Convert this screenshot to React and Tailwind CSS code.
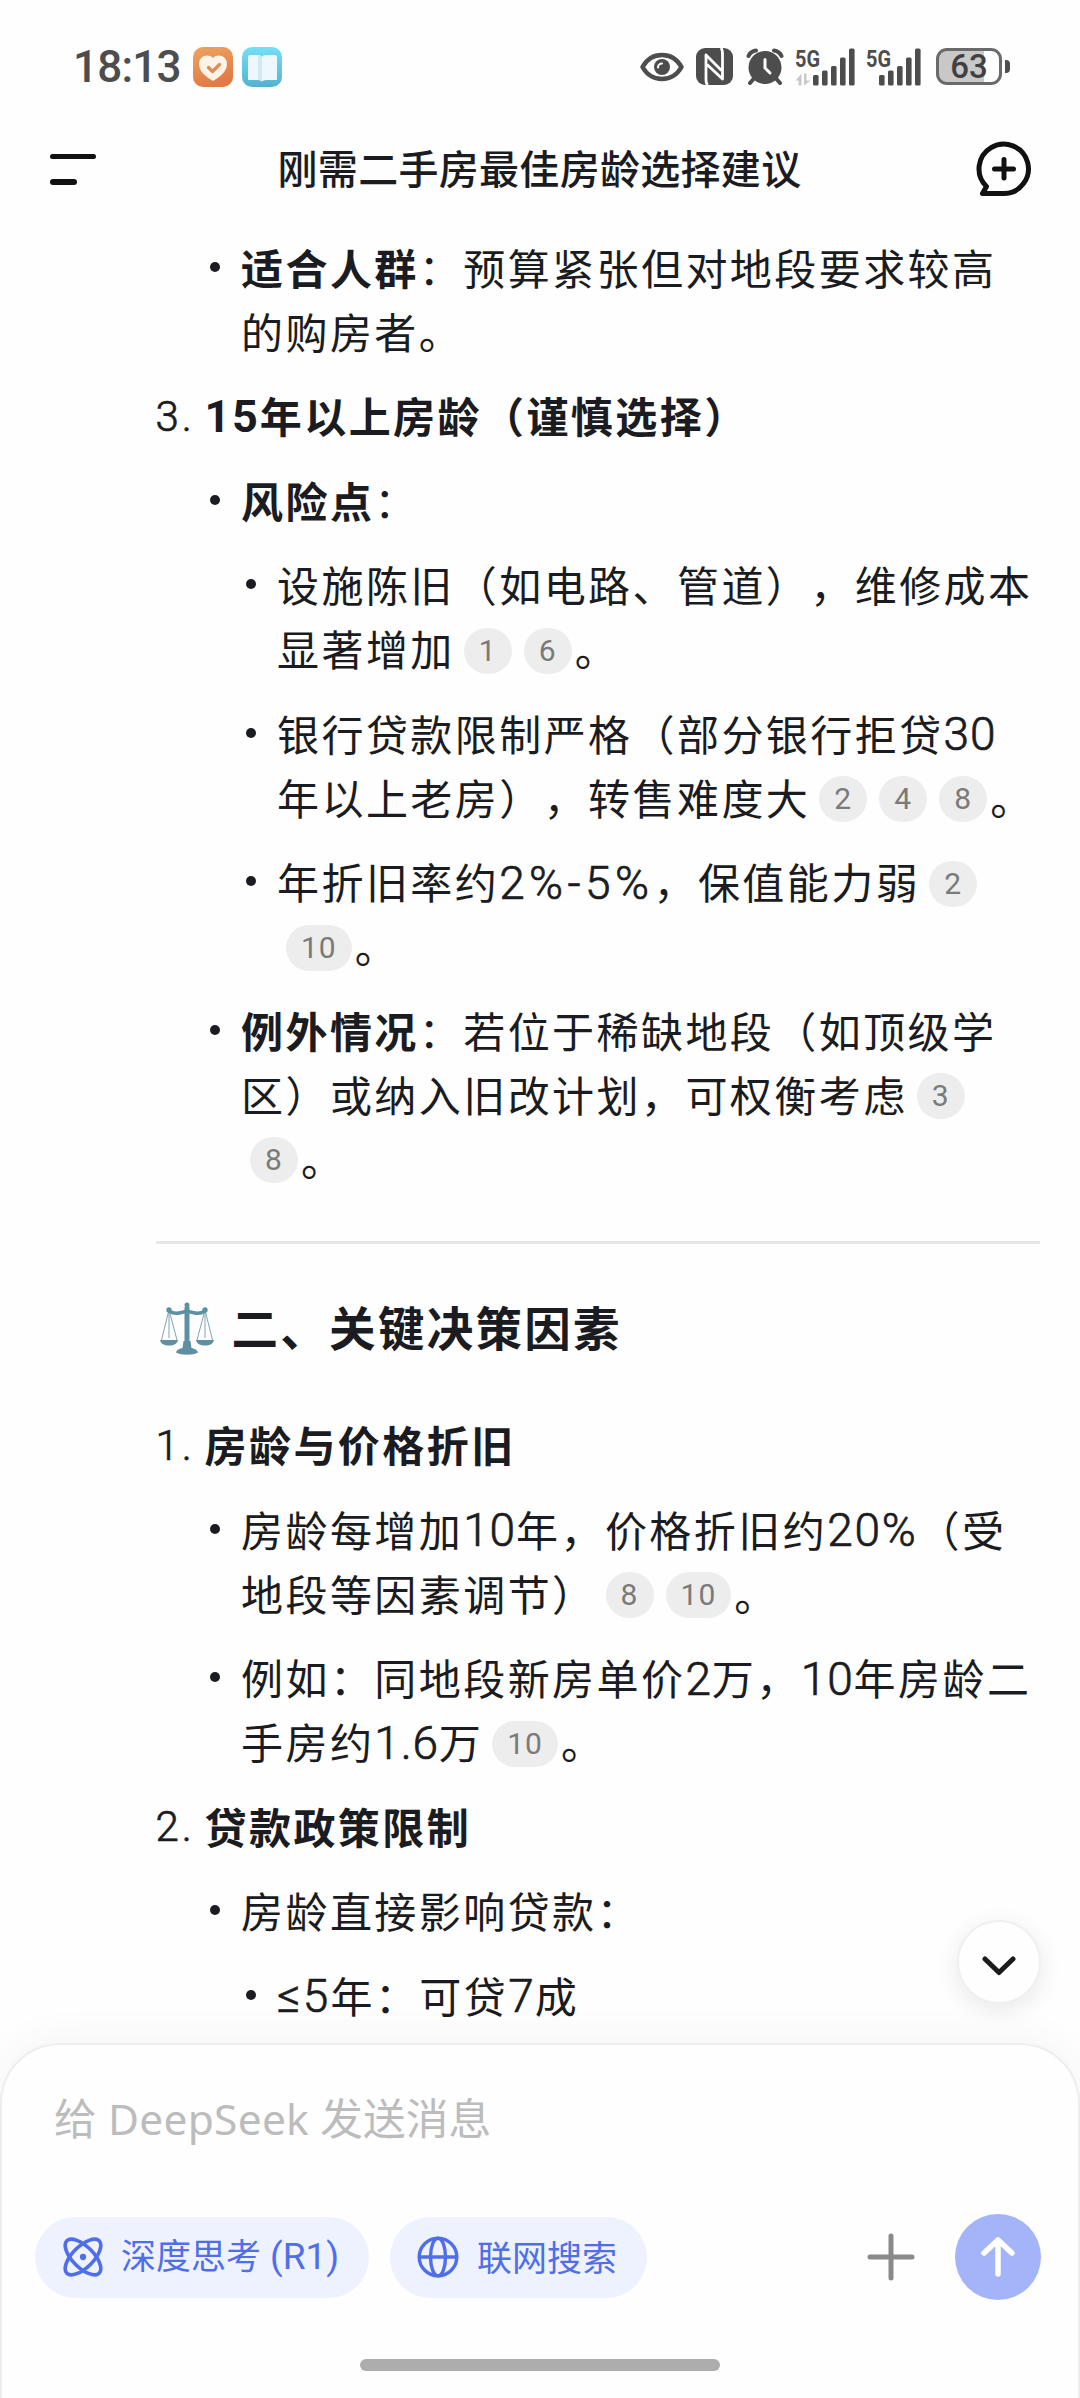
const LINE = 'h-16 flex items-center whitespace-nowrap'

const THIN = 'font-light [-webkit-text-stroke:0.7px_currentColor]'

function Num({ children, bold, className = 'text-[46px] tracking-[0.9px]' }) {
  return <span className={`font-[Roboto] mt-[3px] ${bold ? 'font-bold' : THIN} ${className}`}>{children}</span>
}

function Cite({ n }) {
  return (
    <span className="inline-flex items-center justify-center h-[46px] min-w-[48px] px-[15px] ml-[9px] mr-[3px] mt-[5px] rounded-full bg-[#ededed] text-[#7a7a7a] font-[Roboto] text-[30px] tracking-[1px]">
      {n}
    </span>
  )
}

function Line({ children }) {
  return <div className={LINE}>{children}</div>
}

function Bullet({ level = 2, children }) {
  return (
    <li className={level === 2 ? 'flex pl-[54px]' : 'flex pl-[90px]'}>
      <span className="w-2.5 h-2.5 mt-[27px] mr-[21.500px] rounded-full bg-[#1b1c21] shrink-0" />
      <div>{children}</div>
    </li>
  )
}

function Numbered({ n, children }) {
  return (
    <li className="flex">
      <div className={`${LINE} w-[49px]`}><Num className="text-[42px] tracking-[3px]">{n}.</Num></div>
      <div className={`${LINE} font-bold`}>{children}</div>
    </li>
  )
}

// x is where the first of the five bars starts
function Signal({ x, data }) {
  return (
    <svg className="h-[50px] -mt-3" width={x + 42} viewBox={`0 -12 ${x + 42} 50`} fill="#4d4d4d">
      <text x="0" y="18.500" fontSize="24" fontWeight="700" fontFamily="Roboto" textLength="25" lengthAdjust="spacingAndGlyphs">5G</text>
      {data && <path d="M0.500 32.500l6-7v12h-3v-5zM9 37.500v-12h2.500v7h4z" fill="#c9c9c9" />}
      <rect x={x} y="27" width="5.600" height="10.500" rx="1.500" />
      <rect x={x + 9} y="22.500" width="5.600" height="15" rx="1.500" />
      <rect x={x + 18} y="18" width="5.600" height="19.500" rx="1.500" />
      <rect x={x + 27} y="9.500" width="5.600" height="28" rx="1.500" />
      <rect x={x + 36} y="0.500" width="5.600" height="37" rx="1.500" />
    </svg>
  )
}

function StatusBar() {
  return (
    <div className="flex items-center h-[133px] pl-[73px] text-[#4d4d4d]">
      <span className="w-[120px] font-[Roboto] font-medium text-[44px] tracking-[-0.800px]">18:13</span>
      <svg className="w-10 h-10" viewBox="0 0 40 40">
        <defs>
          <linearGradient id="orange" x1="0" y1="0" x2="0.3" y2="1">
            <stop stopColor="#eda45f" />
            <stop offset="1" stopColor="#e27a45" />
          </linearGradient>
        </defs>
        <rect width="40" height="40" rx="10" fill="url(#orange)" />
        <path d="M20 34C11 29 6 23 6 17c0-8 9-11 14-6 5-5 14-2 14 6 0 6-5 12-14 17z" fill="#fdf3e9" />
        <path d="M15.500 20.500l4 4 7-7" fill="none" stroke="#e38a50" strokeWidth="3.200" strokeLinecap="round" strokeLinejoin="round" />
      </svg>
      <svg className="w-10 h-10 ml-[9px]" viewBox="0 0 40 40">
        <defs>
          <linearGradient id="sky" x1="0" y1="0" x2="0" y2="1">
            <stop stopColor="#72dff8" />
            <stop offset="1" stopColor="#55b2cf" />
          </linearGradient>
        </defs>
        <rect width="40" height="40" rx="10" fill="url(#sky)" />
        <path d="M6 10q0-2 2-2h8q4 0 4 3 0-3 4-3h9q2 0 2 2v23H24q-3 0-4 1.500-1-1.500-4-1.500H6z" fill="#eef7fd" />
        <path d="M20 11v23q-1-1.500-4-1.500V8q4 0 4 3z" fill="#d3e8f6" />
      </svg>
      <svg className="w-11 h-[30px] ml-[358px]" viewBox="0 0 44 30" fill="none">
        <path d="M2.500 15C7 7 14 3 22 3s15 4 19.500 12C37 23 30 27 22 27S7 23 2.500 15z" stroke="#4d4d4d" strokeWidth="4.500" strokeLinejoin="round" />
        <circle cx="22" cy="15" r="8" fill="#4d4d4d" />
        <path d="M18 15.500a4 4 0 0 1 4-4" stroke="#fff" strokeWidth="2" strokeLinecap="round" />
      </svg>
      <svg className="w-[37px] h-[37px] ml-3" viewBox="0 0 37 37">
        <rect width="37" height="37" rx="9" fill="#4d4d4d" />
        <path d="M11.500 37q-1.500-2-1.500-5V7l15.500 15.500M25 0q1.500 2 1.500 5v26L11 16.500" fill="none" stroke="#fff" strokeWidth="2.800" strokeLinejoin="round" />
      </svg>
      <svg className="w-[38px] h-[37px] ml-[13px]" viewBox="0 0 38 37" fill="none" stroke="#4d4d4d" strokeLinecap="round">
        <circle cx="19" cy="19.500" r="16.500" fill="#4d4d4d" stroke="none" />
        <path d="M2.500 8C4 4.500 6.500 3 10 2.500M35.500 8C34 4.500 31.500 3 28 2.500M7.500 31L4 35M30.500 31l3.500 4" strokeWidth="4" />
        <path d="M19 11.500v8.500l5 5" stroke="#fff" strokeWidth="3" />
      </svg>
      <div className="flex gap-[11px] ml-[11px]">
        <Signal x={18} data />
        <Signal x={13} />
      </div>
      <div className="flex items-center justify-center w-[66px] h-[37px] ml-[15px] rounded-[11px] border-[3px] border-[#6a6a6a] bg-[linear-gradient(90deg,#c8c8c8_75%,#fefefe_75%)]">
        <span className="font-[Roboto] font-medium text-[33px] leading-none text-[#404040]">63</span>
      </div>
      <div className="w-[5px] h-[13px] ml-[3px] rounded-r bg-[#4d4d4d]" />
    </div>
  )
}

function Header() {
  return (
    <div className="flex items-center justify-between h-[72px] pl-[50px] pr-[48px]">
      <div className="w-[56px] flex flex-col gap-5">
        <div className="w-[46px] h-[5.500px] rounded-full bg-[#111]" />
        <div className="w-[27px] h-[5.500px] rounded-full bg-[#111]" />
      </div>
      <h1 className="-mt-1 mr-[3px] text-[40px] tracking-[0.3px] font-medium">刚需二手房最佳房龄选择建议</h1>
      <svg className="w-[56px] h-[56px]" viewBox="0 0 56 56" fill="none" stroke="#111" strokeWidth="5" strokeLinecap="round" strokeLinejoin="round">
        <path d="M6.500 52.500H28A24.700 24.700 0 1 0 10.500 45.500z" />
        <path d="M28 18.500v18.500M18.500 28h19" />
      </svg>
    </div>
  )
}

function Scales() {
  return (
    <svg className="w-[54px] h-[53px]" viewBox="0 0 54 53" fill="none" stroke="#5f8fa3">
      <path d="M9 8L1.500 38M9 8l8 30M45 8l-8 30M45 8l7.500 30M9 8v28M45 8v28" strokeWidth="1" stroke="#7fa5b5" />
      <path d="M9 9c6 4 11 2 18 0 7 2 12 4 18 0" strokeWidth="3.500" strokeLinecap="round" />
      <path d="M27 5v38" strokeWidth="5" />
      <circle cx="27" cy="3" r="2.500" fill="#5f8fa3" stroke="none" />
      <circle cx="9" cy="8" r="2.700" fill="#5f8fa3" stroke="none" />
      <circle cx="45" cy="8" r="2.700" fill="#5f8fa3" stroke="none" />
      <path d="M0 38h18c-1 4-4 5.500-9 5.500s-8-1.500-9-5.500zM36 38h18c-1 4-4 5.500-9 5.500s-8-1.500-9-5.500zM23.500 39h7l1 7c4 1 6 2 6.500 4.500-5 3-17 3-22 0 .5-2.500 2.500-3.500 6.500-4.500z" fill="#5f8fa3" stroke="none" />
    </svg>
  )
}

function Answer() {
  return (
    <div className="pl-[155.500px] pr-10 pt-[29.500px] text-[42px] tracking-[2.440px]">
      <ul className="flex flex-col gap-[20.500px]">
        <Bullet>
          <Line><b>适合人群</b>：预算紧张但对地段要求较高</Line>
          <Line>的购房者。</Line>
        </Bullet>
        <Numbered n={3}><Num bold className="text-[45px] tracking-[1.800px]">15</Num>年以上房龄（谨慎选择）</Numbered>
        <Bullet><Line><b>风险点</b>：</Line></Bullet>
        <Bullet level={3}>
          <Line>设施陈旧（如电路、管道），维修成本</Line>
          <Line>显著增加<Cite n={1} /><Cite n={6} />。</Line>
        </Bullet>
        <Bullet level={3}>
          <Line>银行贷款限制严格（部分银行拒贷<Num>30</Num></Line>
          <Line>年以上老房），转售难度大<Cite n={2} /><Cite n={4} /><Cite n={8} />。</Line>
        </Bullet>
        <Bullet level={3}>
          <Line>年折旧率约<Num className="text-[46px] tracking-[4.400px]">2%-5%</Num>，保值能力弱<Cite n={2} /></Line>
          <Line><Cite n={10} />。</Line>
        </Bullet>
        <Bullet>
          <Line><b>例外情况</b>：若位于稀缺地段（如顶级学</Line>
          <Line>区）或纳入旧改计划，可权衡考虑<Cite n={3} /></Line>
          <Line><Cite n={8} />。</Line>
        </Bullet>
      </ul>
      <hr className="mt-[51px] border-t-[3px] border-[#e6e6e6]" />
      <h2 className="flex items-center h-[72px] mt-[49px] text-[46.500px] tracking-[2.300px] font-bold">
        <span className="ml-1 mr-[18px]"><Scales /></span>
        <span className="-mt-1">二、关键决策因素</span>
      </h2>
      <ul className="flex flex-col gap-[20.500px] mt-[47.500px]">
        <Numbered n={1}>房龄与价格折旧</Numbered>
        <Bullet>
          <Line>房龄每增加<Num>10</Num>年，价格折旧约<Num className="text-[46px] tracking-[1.800px]">20%</Num>（受</Line>
          <Line>地段等因素调节）<Cite n={8} /><Cite n={10} />。</Line>
        </Bullet>
        <Bullet>
          <Line>例如：同地段新房单价<Num>2</Num>万，<Num>10</Num>年房龄二</Line>
          <Line>手房约<Num className="text-[46px] tracking-[0.800px]">1.6</Num>万<Cite n={10} />。</Line>
        </Bullet>
        <Numbered n={2}>贷款政策限制</Numbered>
        <Bullet><Line>房龄直接影响贷款：</Line></Bullet>
        <Bullet level={3}><Line><Num className="text-[46px] tracking-[2.200px]">≤5</Num>年：可贷<Num>7</Num>成</Line></Bullet>
      </ul>
    </div>
  )
}

function Chip({ icon, className, children }) {
  return (
    <button className={`flex items-center h-[81px] rounded-full bg-[#eef2ff] text-[#4f6ee8] text-[35px] whitespace-nowrap ${className}`}>
      {icon}
      <span className="-mt-[3px]">{children}</span>
    </button>
  )
}

function Composer() {
  return (
    <div className="absolute inset-x-0 bottom-0 h-[355px] px-[33px] rounded-t-[60px] border-[2.500px] border-b-0 border-[#eeeeee] bg-[#fefefe] shadow-[0_-6px_40px_rgba(0,0,0,0.04)]">
      <div className="flex items-baseline h-[60px] mt-[50px] pl-[19px] text-[42.700px] text-[#bcbcbc] whitespace-pre">
        给<span className="font-['Noto_Sans'] text-[42.500px] leading-none tracking-[0.25px]"> DeepSeek </span>发送消息
      </div>
      <div className="flex items-center h-[88px] mt-[58px]">
        <Chip
          className="w-[334px] pl-7"
          icon={
            <svg className="w-[40px] h-[40px] mr-[18px]" viewBox="0 0 42 42" fill="none" stroke="currentColor" strokeWidth="3.800">
              <ellipse cx="21" cy="21" rx="24" ry="11" transform="rotate(45 21 21)" />
              <ellipse cx="21" cy="21" rx="24" ry="11" transform="rotate(-45 21 21)" />
              <circle cx="21" cy="21" r="3.300" fill="currentColor" stroke="none" />
            </svg>
          }
        >
          深度思考<span className="font-[Roboto] text-[37px] ml-[9px]">(R1)</span>
        </Chip>
        <Chip
          className="w-[257px] pl-[27px] ml-[21px]"
          icon={
            <svg className="w-[42px] h-[42px] mr-[18px]" viewBox="0 0 42 42" fill="none" stroke="currentColor" strokeWidth="3.400">
              <circle cx="21" cy="21" r="18.800" />
              <ellipse cx="21" cy="21" rx="7.500" ry="18.800" />
              <path d="M2 21h38" />
            </svg>
          }
        >
          联网搜索
        </Chip>
        <svg className="w-12 h-12 ml-[220px]" viewBox="0 0 48 48" stroke="#8a8a8a" strokeWidth="5" strokeLinecap="round">
          <path d="M24 3v42M3 24h42" />
        </svg>
        <div className="flex items-center justify-center w-[86px] h-[86px] ml-10 rounded-full bg-[#a4b4f8] shrink-0">
          <svg className="w-[34px] h-[42px]" viewBox="0 0 34 42" fill="none" stroke="#fff" strokeWidth="5.500" strokeLinecap="round" strokeLinejoin="round">
            <path d="M17 38V4M3 17L17 4l14 13" />
          </svg>
        </div>
      </div>
      <div className="w-[360px] h-3 mt-[58px] mx-auto rounded-full bg-[#adadad]" />
    </div>
  )
}

export default function App() {
  return (
    <div className="relative w-[1080px] h-[2398px] overflow-hidden bg-[#fefefe] text-[#1b1c21] font-['Noto_Sans_CJK_SC',sans-serif] leading-none [text-spacing-trim:space-all]">
      <StatusBar />
      <Header />
      <Answer />
      <div className="absolute left-[957px] top-[1920px] flex items-center justify-center w-[84px] h-[84px] rounded-full border-2 border-[#f0f0f0] bg-[#fefefe] shadow-[0_6px_24px_rgba(0,0,0,0.09)]">
        <svg className="w-[34px] h-[20px] mt-2" viewBox="0 0 34 20" fill="none" stroke="#1b1b1b" strokeWidth="5" strokeLinecap="round" strokeLinejoin="round">
          <path d="M3 3l14 13.500L31 3" />
        </svg>
      </div>
      <Composer />
    </div>
  )
}
